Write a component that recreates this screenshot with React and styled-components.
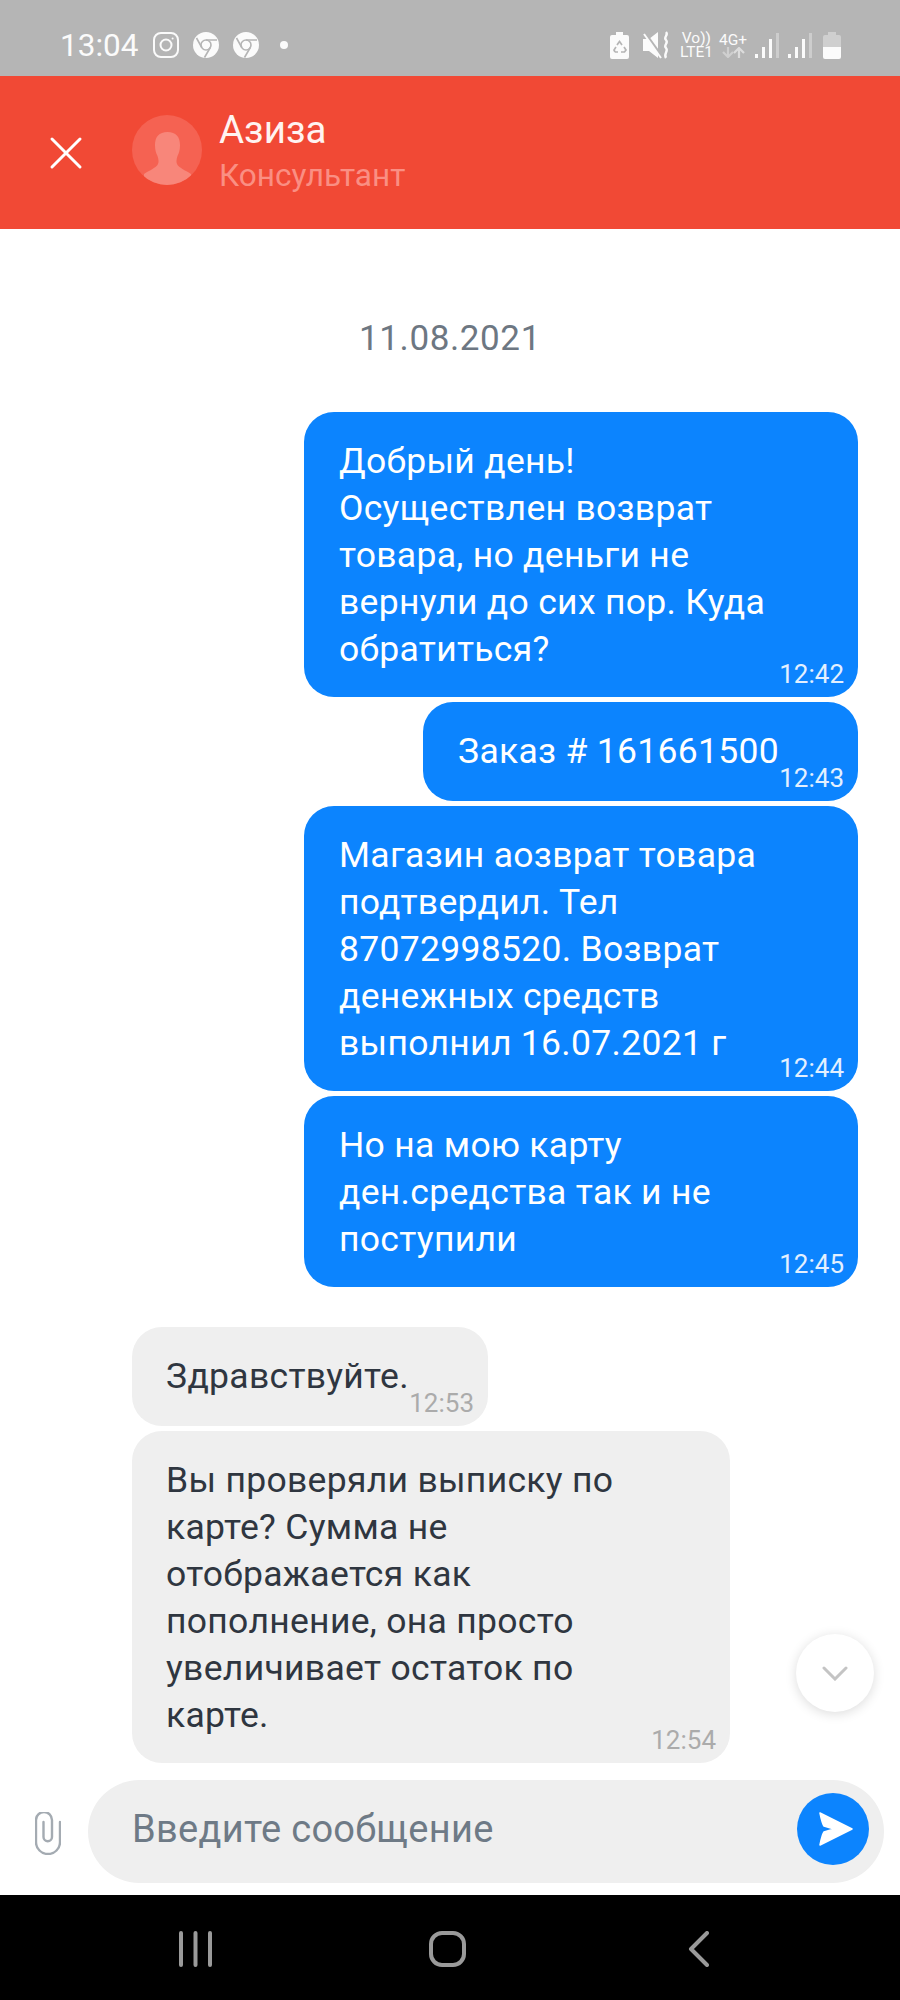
import styled, { createGlobalStyle } from 'styled-components';

const GlobalStyle = createGlobalStyle`
  html, body {
    margin: 0;
    padding: 0;
    background: #fff;
  }
  body {
    font-family: Roboto, "Liberation Sans", sans-serif;
  }
`;

const Page = styled.div`
  width: 900px;
  height: 2000px;
  display: flex;
  flex-direction: column;
  position: relative;
  overflow: hidden;
  background: #fff;
`;

const StatusBar = styled.div`
  height: 76px;
  flex-shrink: 0;
  background: #b5b5b5;
  display: flex;
  align-items: center;
  justify-content: space-between;
  padding: 14px 59px 0 60px;
  box-sizing: border-box;
  color: #fbfbfb;
`;

const StatusLeft = styled.div`
  display: flex;
  align-items: center;
  gap: 14px;
`;

const Clock = styled.span`
  font-size: 31.5px;
  margin-right: 1px;
`;

const Dot = styled.span`
  width: 8px;
  height: 8px;
  margin-left: 7px;
  border-radius: 50%;
  background: #fbfbfb;
`;

const StatusRight = styled.div`
  display: flex;
  align-items: center;
`;

const NetStack = styled.div`
  display: flex;
  flex-direction: column;
  align-items: center;
  font-size: 15.5px;
  line-height: 14px;
  margin-left: ${props => props.$gap}px;
`;

const Header = styled.header`
  height: 153px;
  flex-shrink: 0;
  background: #f14935;
  display: flex;
  align-items: center;
  padding-left: 49px;
  box-sizing: border-box;
`;

const Avatar = styled.div`
  width: 70px;
  height: 70px;
  margin: -6px 0 0 49px;
  border-radius: 50%;
  background: #f56252;
  overflow: hidden;
`;

const HeaderText = styled.div`
  margin-left: 17px;
  margin-top: -2px;
`;

const Name = styled.div`
  font-size: 38.5px;
  line-height: 48px;
  color: #fff3f1;
`;

const Role = styled.div`
  font-size: 31.5px;
  line-height: 44px;
  color: #fa8f83;
`;

const Chat = styled.main`
  flex: 1;
  display: flex;
  flex-direction: column;
  gap: 5px;
  min-height: 0;
`;

const DateLabel = styled.div`
  height: 178px;
  display: flex;
  align-items: center;
  justify-content: center;
  font-size: 35px;
  letter-spacing: 0.6px;
  color: #6d7782;
  box-sizing: border-box;
  padding-top: 40px;
`;

const Bubble = styled.div`
  position: relative;
  box-sizing: border-box;
  width: ${props => props.$width}px;
  min-height: 99px;
  align-self: ${props => (props.$own ? 'flex-end' : 'flex-start')};
  margin: ${props => props.$top || 0}px 42px 0 132px;
  padding: 26px 35px 24px ${props => (props.$own ? 35 : 34)}px;
  border-radius: 30px;
  font-size: 35.5px;
  line-height: 47px;
  letter-spacing: 0.3px;
  white-space: nowrap;
  background: ${props => (props.$own ? '#0c84fe' : '#efefef')};
  color: ${props => (props.$own ? '#fff' : '#2f3640')};
`;

const Time = styled.span`
  position: absolute;
  right: 14px;
  bottom: 8px;
  font-size: 26px;
  line-height: 30px;
  letter-spacing: 0;
  color: ${props => (props.$own ? '#e3f0ff' : '#ababab')};
`;

const ScrollButton = styled.div`
  position: absolute;
  left: 796px;
  top: 1634px;
  width: 78px;
  height: 78px;
  border-radius: 50%;
  background: #fff;
  box-shadow: 0 2px 12px rgba(0, 0, 0, 0.14);
  display: flex;
  align-items: center;
  justify-content: center;
`;

const Composer = styled.div`
  height: 103px;
  margin-bottom: 12px;
  flex-shrink: 0;
  display: flex;
  align-items: center;
  padding: 0 16px 0 35px;
`;

const Clip = styled.svg`
  width: 26px;
  height: 43px;
  margin-top: 3px;
  flex-shrink: 0;
`;

const InputBox = styled.div`
  flex: 1;
  height: 103px;
  margin-left: 27px;
  border-radius: 52px;
  background: #efefef;
  display: flex;
  align-items: center;
  justify-content: space-between;
  padding: 0 15px 6px 44px;
  box-sizing: border-box;
`;

const Placeholder = styled.span`
  font-size: 38px;
  letter-spacing: 0.3px;
  color: #6e7a86;
`;

const SendButton = styled.div`
  width: 72px;
  height: 72px;
  border-radius: 50%;
  background: #0c84fe;
  display: flex;
  align-items: center;
  justify-content: center;
`;

const NavBar = styled.nav`
  height: 105px;
  flex-shrink: 0;
  background: #000;
  display: flex;
  align-items: center;
  padding-left: 179px;
`;

const NavIcon = styled.svg`
  height: 36px;
  margin-right: ${props => props.$gap}px;
  margin-top: 2px;
  flex-shrink: 0;
`;

const ownMessages = [
  { width: 554, time: '12:42', lines: ['Добрый день!', 'Осуществлен возврат', 'товара, но деньги не', 'вернули до сих пор. Куда', 'обратиться?'] },
  { width: 435, time: '12:43', lines: ['Заказ # 161661500'] },
  { width: 554, time: '12:44', lines: ['Магазин аозврат товара', 'подтвердил. Тел', '87072998520. Возврат', 'денежных средств', 'выполнил 16.07.2021 г'] },
  { width: 554, time: '12:45', lines: ['Но на мою карту', 'ден.средства так и не', 'поступили'] },
];

const replyMessages = [
  { width: 356, time: '12:53', top: 35, lines: ['Здравствуйте.'] },
  { width: 598, time: '12:54', lines: ['Вы проверяли выписку по', 'карте? Сумма не', 'отображается как', 'пополнение, она просто', 'увеличивает остаток по', 'карте.'] },
];

const Message = ({ own, width, top, time, lines }) => (
  <Bubble $own={own} $width={width} $top={top}>
    {lines.map(line => <div key={line}>{line}</div>)}
    <Time $own={own}>{time}</Time>
  </Bubble>
);

const Chrome = () => (
  <svg width="26" height="26" viewBox="0 0 26 26">
    <circle cx="13" cy="13" r="13" fill="#fbfbfb" />
    <circle cx="13" cy="13" r="5" fill="none" stroke="#b5b5b5" strokeWidth="1.6" />
    <path d="M13 8h11M8.8 15.5 3.5 6M17.3 15.5 11.5 25.5" stroke="#b5b5b5" strokeWidth="1.6" fill="none" />
  </svg>
);

const Instagram = () => (
  <svg width="26" height="26" viewBox="0 0 26 26" fill="none" stroke="#fbfbfb" strokeWidth="2">
    <rect x="1" y="1" width="24" height="24" rx="7" />
    <circle cx="13" cy="13" r="5.5" />
    <circle cx="19.6" cy="6.4" r="1" fill="#fbfbfb" stroke="none" />
  </svg>
);

const BatterySaver = () => (
  <svg width="19" height="27" viewBox="0 0 19 27">
    <path d="M6 0h7v3h4a2 2 0 0 1 2 2v20a2 2 0 0 1-2 2H2a2 2 0 0 1-2-2V5a2 2 0 0 1 2-2h4z" fill="#fbfbfb" />
    <path d="M7 13l2.5-3.5L12 13M5 20l-1-2 2-3M14 15l2 3-1.5 2H11M8 20H5" fill="none" stroke="#b5b5b5" strokeWidth="1.7" />
  </svg>
);

const Mute = () => (
  <svg width="27" height="28" viewBox="0 0 27 28" style={{ marginLeft: 14 }}>
    <path d="M0 8h6l9-7v26l-9-7H0z" fill="#fbfbfb" />
    <path d="M1 1l18 25" stroke="#b5b5b5" strokeWidth="3" />
    <path d="M1 3l17 24" stroke="#fbfbfb" strokeWidth="2" />
    <path d="M23 1c3 3-3 5 0 8s-3 5 0 8-3 6 0 10" fill="none" stroke="#fbfbfb" strokeWidth="2.4" />
  </svg>
);

const Signal = ({ gap }) => (
  <svg width="24" height="25" viewBox="0 0 24 25" style={{ marginLeft: gap }}>
    <rect x="0" y="21" width="3" height="4" fill="#fbfbfb" />
    <rect x="7" y="14" width="3" height="11" fill="#fbfbfb" />
    <rect x="14" y="6" width="3" height="19" fill="#fbfbfb" />
    <rect x="21" y="0" width="3" height="25" fill="#cdcdcd" />
  </svg>
);

const Battery = () => (
  <svg width="18" height="27" viewBox="0 0 18 27" style={{ marginLeft: 11 }}>
    <path d="M5 0h8v3h3a2 2 0 0 1 2 2v10H0V5a2 2 0 0 1 2-2h3z" fill="#cfcfcf" />
    <path d="M0 15h18v10a2 2 0 0 1-2 2H2a2 2 0 0 1-2-2z" fill="#fbfbfb" />
  </svg>
);

const Arrows = () => (
  <svg width="24" height="11" viewBox="0 0 24 11">
    <path d="M7 0v9M2 5l5 5 5-5" fill="none" stroke="#cfcfcf" strokeWidth="2.2" />
    <path d="M18 11V2M13 6l5-5 5 5" fill="none" stroke="#dcdcdc" strokeWidth="2.2" />
  </svg>
);

const App = () => {
  return (
    <>
      <GlobalStyle />
      <Page>
        <StatusBar>
          <StatusLeft>
            <Clock>13:04</Clock>
            <Instagram />
            <Chrome />
            <Chrome />
            <Dot />
          </StatusLeft>
          <StatusRight>
            <BatterySaver />
            <Mute />
            <NetStack $gap={10}>
              <span>Vo))</span>
              <span>LTE1</span>
            </NetStack>
            <NetStack $gap={6}>
              <span>4G+</span>
              <Arrows />
            </NetStack>
            <Signal gap={8} />
            <Signal gap={9} />
            <Battery />
          </StatusRight>
        </StatusBar>

        <Header>
          <svg width="34" height="34" viewBox="0 0 34 34" stroke="#fff" strokeWidth="3" strokeLinecap="round">
            <path d="M3 3l28 28M31 3L3 31" />
          </svg>
          <Avatar>
            <svg width="70" height="70" viewBox="0 0 70 70">
              <path d="M35.5 17C44 17 48 22 48 30C48 35 47 38 45.500 41C44.500 44 44 47 45 49C47 53 53 55 59 59L59 70L12 70L12 59C18 55 24 53 26 49C27 47 26.500 44 25.500 41C24 38 23 35 23 30C23 22 27 17 35.500 17Z" fill="#f8867a" />
            </svg>
          </Avatar>
          <HeaderText>
            <Name>Азиза</Name>
            <Role>Консультант</Role>
          </HeaderText>
        </Header>

        <Chat>
          <DateLabel>11.08.2021</DateLabel>
          {ownMessages.map(m => <Message key={m.time} own {...m} />)}
          {replyMessages.map(m => <Message key={m.time} {...m} />)}
        </Chat>

        <ScrollButton>
          <svg width="26" height="15" viewBox="0 0 26 15" fill="none" stroke="#c4c4c4" strokeWidth="3" strokeLinecap="round">
            <path d="M2 2l11 11L24 2" />
          </svg>
        </ScrollButton>

        <Composer>
          <Clip viewBox="0 0 26 43" fill="none" stroke="#a4abb2" strokeWidth="2.4" strokeLinecap="round">
            <path d="M25 10v20a12 12 0 0 1-24 0V8a8 8 0 0 1 16 0v17a4.250 4.250 0 0 1-8.500 0V10" />
          </Clip>
          <InputBox>
            <Placeholder>Введите сообщение</Placeholder>
            <SendButton>
              <svg width="34" height="34" viewBox="0 0 34 34" style={{ marginLeft: 5 }}>
                <path d="M1 1L33 17L1 33Q3 23 5 20L15 17L5 14Q3 11 1 1Z" fill="#fff" stroke="#fff" strokeWidth="1.500" strokeLinejoin="round" />
              </svg>
            </SendButton>
          </InputBox>
        </Composer>

        <NavBar>
          <NavIcon $gap={217} width="33" viewBox="0 0 33 36" stroke="#9a9a9a" strokeWidth="4" strokeLinecap="round">
            <path d="M2 2v32M16.500 2v32M31 2v32" />
          </NavIcon>
          <NavIcon $gap={222} width="37" viewBox="0 0 37 36" fill="none" stroke="#9a9a9a" strokeWidth="4">
            <rect x="2" y="2" width="33" height="32" rx="11" />
          </NavIcon>
          <NavIcon width="21" viewBox="0 0 21 36" fill="none" stroke="#9a9a9a" strokeWidth="4" strokeLinecap="round" strokeLinejoin="round">
            <path d="M19 2L3 18l16 16" />
          </NavIcon>
        </NavBar>
      </Page>
    </>
  );
};

export default App;
